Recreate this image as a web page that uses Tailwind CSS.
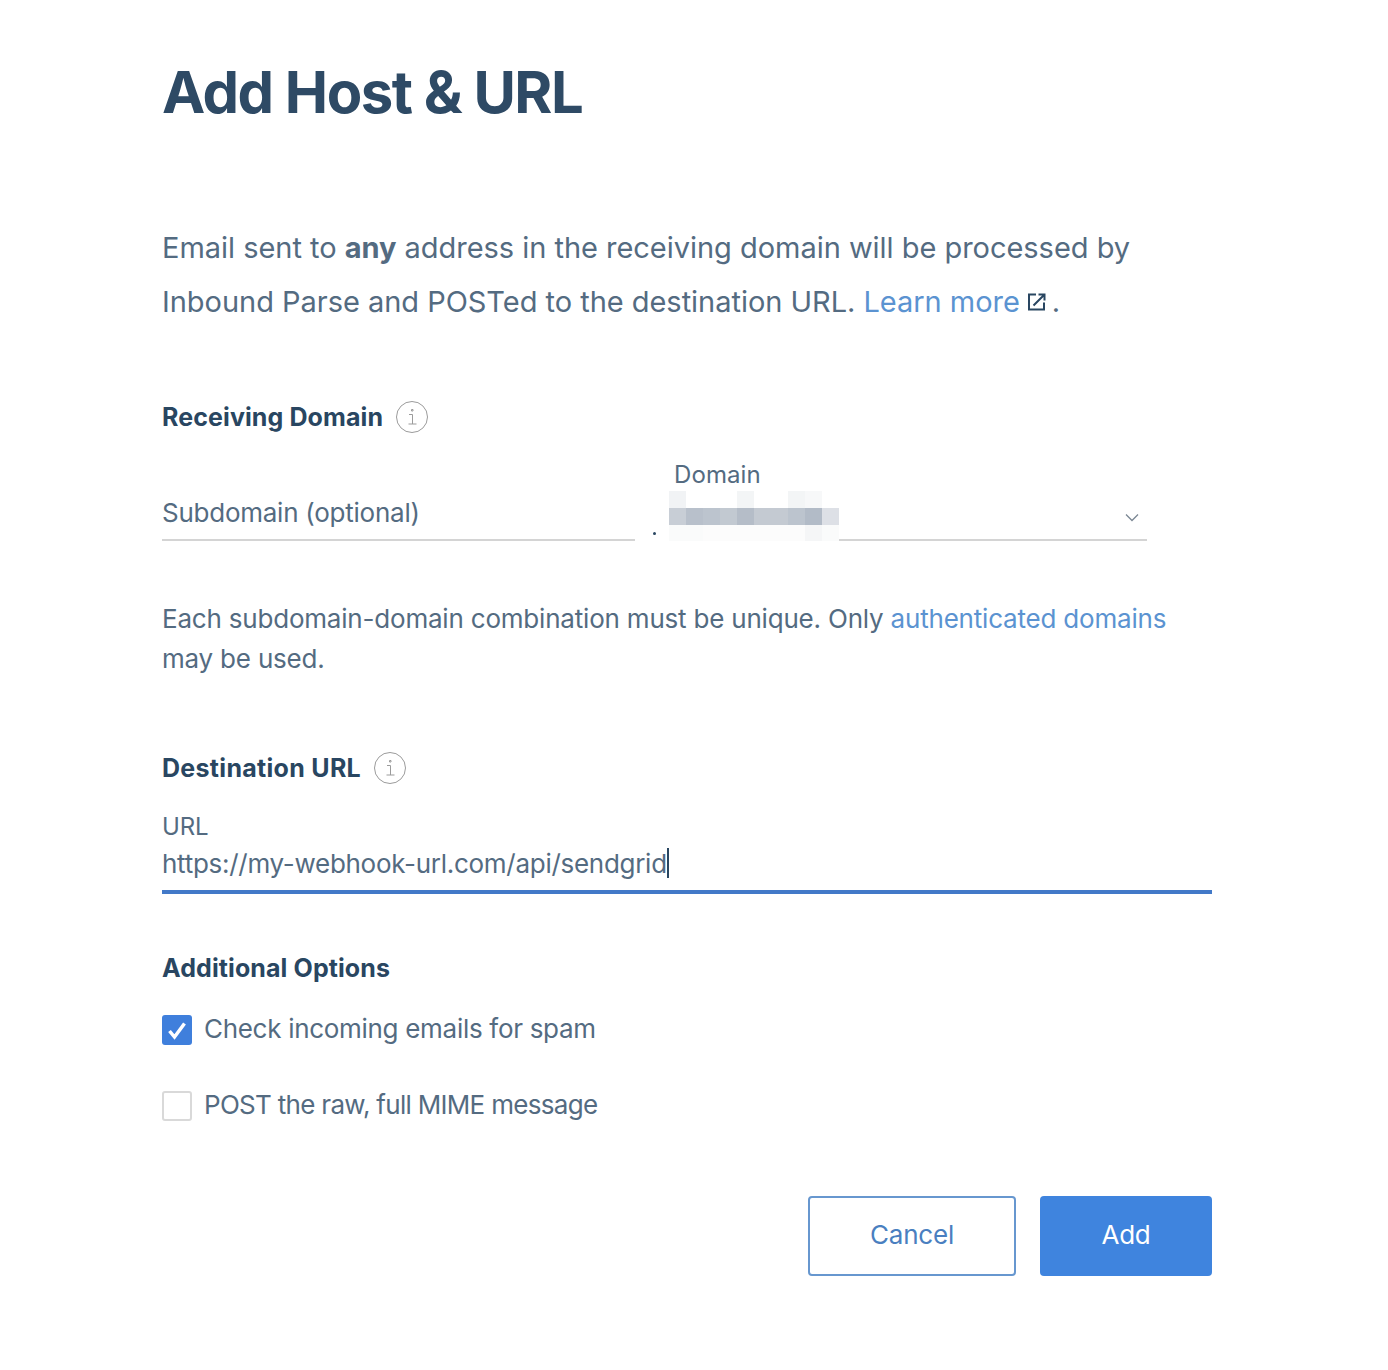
<!DOCTYPE html>
<html lang="en">
<head>
    <meta charset="UTF-8">
    <title>Add Host &amp; URL</title>
    <script src="https://cdn.jsdelivr.net/npm/@tailwindcss/browser@4"></script>
</head>
<body class="bg-white font-['Inter',sans-serif] text-[#546b81]">
    <main class="w-[1388px] h-[1370px] pl-[162px] pr-[176px] overflow-hidden">

        <h1 class="pt-[60px] h-[221px] text-[58px] leading-[64px] font-bold tracking-[-1.5px] text-[#2e4a65]">Add Host &amp; URL</h1>

        <p class="text-[29px] leading-[54px] tracking-[-0.03px] whitespace-nowrap">
            Email sent to <b class="font-bold">any</b> address in the receiving domain will be processed by<br>
            Inbound Parse and POSTed to the destination URL. <a class="text-[#5b93d1]">Learn more</a><svg class="inline-block w-5 h-5 -mt-1 ml-[7px] mr-[5px]" viewBox="0 0 20 20" fill="none" stroke="#294661" stroke-width="2"><path d="M9 2.500H2v15h15v-7"/><path d="M6.500 13.500 17 3M11.500 2.500H17.500V8.500"/></svg>.
        </p>

        <!-- Receiving domain -->
        <section class="mt-[73px] flex items-center gap-[13px] h-8">
            <h2 class="text-[25px] font-bold tracking-[0.1px] text-[#294661]">Receiving Domain</h2>
            <svg class="w-8 h-8 mb-[2px]" viewBox="0 0 32 32" fill="none" stroke="#9b9b9b"><circle cx="16" cy="16" r="15.500"/><path d="M13 13.500h3.500V23M12.500 23h8M15.500 8.500h1.500v1.500h-1.500z"/></svg>
        </section>

        <div class="mt-[25px] flex w-[985px] h-[82px] items-end">
            <label class="w-[473px] h-[50px] border-b-2 border-[#d4d4d4] text-[26px] leading-[44px] tracking-[-0.25px]">Subdomain (optional)</label>
            <span class="w-[39px] h-[6px] mb-[3px] flex justify-center"><i class="block w-[3px] h-[3px] rounded-full bg-[#294661]"></i></span>
            <div class="relative flex-1 h-[82px] -ml-[4px]">
                <span class="block ml-[4px] text-[24px] leading-[32px] tracking-[0.1px]">Domain</span>
                <div class="absolute -left-px top-[32px] w-[170px] h-[50px] grid grid-cols-[17px_17px_17px_17px_17px_17px_17px_17px_17px_17px] grid-rows-[17px_17px_16px]">
                    <i class="bg-[#f1f3f5]"></i><i></i><i></i><i></i><i class="bg-[#f3f5f6]"></i><i></i><i></i><i class="bg-[#f3f5f6]"></i><i class="bg-[#f7f8f9]"></i><i></i>
                    <i class="bg-[#c8ced6]"></i><i class="bg-[#b8c0cb]"></i><i class="bg-[#bcc4ce]"></i><i class="bg-[#c2c9d1]"></i><i class="bg-[#b5bdc8]"></i><i class="bg-[#c4cad2]"></i><i class="bg-[#c4cad2]"></i><i class="bg-[#bcc4ce]"></i><i class="bg-[#b2bbc7]"></i><i class="bg-[#dde0e6]"></i>
                    <i class="bg-[#fafbfb]"></i><i class="bg-[#fafbfb]"></i><i class="bg-[#fcfcfc]"></i><i class="bg-[#fcfcfc]"></i><i class="bg-[#fcfcfc]"></i><i class="bg-[#fcfcfc]"></i><i class="bg-[#fcfcfc]"></i><i class="bg-[#fcfcfc]"></i><i class="bg-[#f5f6f7]"></i><i class="bg-[#fafbfb]"></i>
                </div>
                <div class="absolute left-[169px] right-0 bottom-0 h-[2px] bg-[#d4d4d4]"></div>
                <svg class="absolute right-[8px] top-[54px] w-[14px] h-[9px]" viewBox="0 0 14 9" fill="none" stroke="#7b8794" stroke-width="1.300"><path d="M1 1.500 7 7.500 13 1.500"/></svg>
            </div>
        </div>

        <p class="mt-[58px] w-[1050px] text-[26px] leading-[40px] tracking-[-0.2px]">Each subdomain-domain combination must be unique. Only <a class="text-[#5b93d1]">authenticated domains</a> may be used.</p>

        <!-- Destination URL -->
        <section class="mt-[74px] flex items-center gap-[13px] h-8">
            <h2 class="text-[25px] font-bold tracking-[0.3px] text-[#294661]">Destination URL</h2>
            <svg class="w-8 h-8 mb-[2px]" viewBox="0 0 32 32" fill="none" stroke="#9b9b9b"><circle cx="16" cy="16" r="15.500"/><path d="M13 13.500h3.500V23M12.500 23h8M15.500 8.500h1.500v1.500h-1.500z"/></svg>
        </section>

        <div class="mt-[27px] w-[1050px] h-[82px] border-b-[4px] border-[#4279c8]">
            <span class="block text-[24px] leading-[30px] tracking-[-0.2px]">URL</span>
            <span class="flex items-center mt-[3px] mb-[2px] h-[36px] text-[26px] tracking-[-0.28px]">https://my-webhook-url.com/api/sendgrid<i class="block w-[2px] h-[30px] bg-[#294661]"></i></span>
        </div>

        <!-- Additional options -->
        <h2 class="mt-[58px] h-8 text-[25px] leading-8 font-bold tracking-[0.1px] text-[#294661]">Additional Options</h2>

        <label class="mt-[30px] flex items-center gap-3 h-[32px] text-[26px] tracking-[-0.3px]">
            <span class="w-[30px] h-[30px] rounded-[3px] bg-[#3f7fdc] flex items-center justify-center">
                <svg class="w-[20px] h-[20px]" viewBox="0 0 20 20" fill="none" stroke="#fff" stroke-width="3.500"><path d="M2.500 11 7.500 17 17.500 3.500"/></svg>
            </span>
            <span class="mb-[3px]">Check incoming emails for spam</span>
        </label>

        <label class="mt-[44px] flex items-center gap-3 h-[32px] text-[26px] tracking-[-0.7px]">
            <span class="w-[30px] h-[30px] rounded-[3px] border-2 border-[#d9d9d9]"></span>
            <span class="mb-[3px]">POST the raw, full MIME message</span>
        </label>

        <div class="mt-[74px] w-[1050px] flex justify-end gap-6">
            <button class="w-[208px] h-[80px] pb-1 rounded-[4px] border-2 border-[#6797cf] text-[26px] tracking-[-0.2px] text-[#4a7fc0]">Cancel</button>
            <button class="w-[172px] h-[80px] pb-1 rounded-[4px] bg-[#3f84de] text-[26px] tracking-[-0.2px] text-white">Add</button>
        </div>
    </main>
</body>
</html>
